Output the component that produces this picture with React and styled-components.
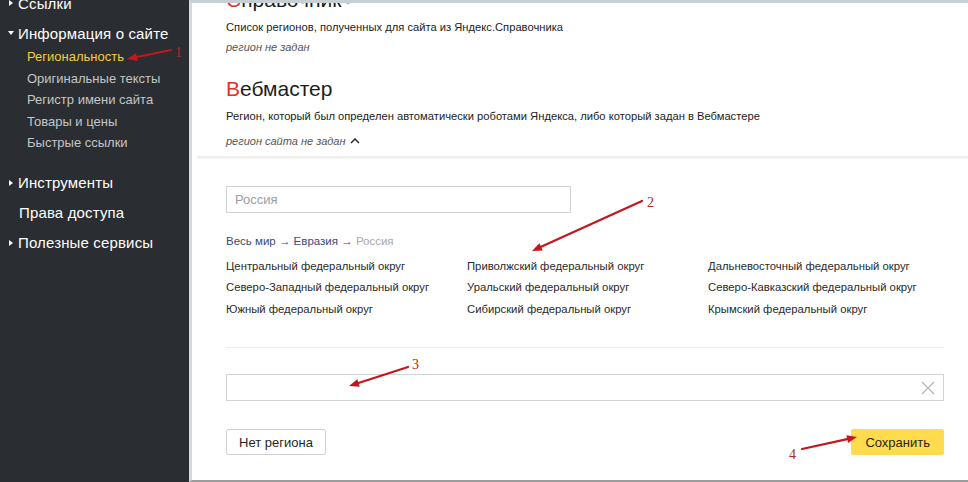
import React from "react";
import styled, { createGlobalStyle } from "styled-components";

const Global = createGlobalStyle`
  html, body {
    margin: 0;
    padding: 0;
    background: #ffffff;
  }
  body {
    font-family: "Liberation Sans", Arial, sans-serif;
  }
`;

const Page = styled.div`
  position: relative;
  display: flex;
  width: 968px;
  height: 482px;
  overflow: hidden;
`;

const Sidebar = styled.aside`
  width: 189px;
  flex-shrink: 0;
  background: #2a2d31;
  overflow: hidden;
`;

const NavItem = styled.div`
  display: flex;
  align-items: center;
  height: 30px;
  padding-left: ${(p) => (p.$arrow ? "8px" : "19px")};
  margin-top: ${(p) => p.$mt || 0};
  font-size: 15px;
  color: #ffffff;
  letter-spacing: 0.15px;
`;

const Tri = styled.span`
  display: inline-block;
  width: 0;
  height: 0;
  margin-right: ${(p) => (p.$open ? "4px" : "5px")};
  ${(p) =>
    p.$open
      ? `border-left: 3px solid transparent;
         border-right: 3px solid transparent;
         border-top: 4px solid #fff;`
      : `border-top: 3px solid transparent;
         border-bottom: 3px solid transparent;
         border-left: 4px solid #fff;
         margin-left: 1px;`}
`;

const SubList = styled.div`
  margin-top: -2px;
  margin-bottom: 14px;
`;

const SubItem = styled.div`
  height: 21.5px;
  line-height: 21.5px;
  padding-left: 27px;
  font-size: 13px;
  color: ${(p) => (p.$active ? "#f2cf3b" : "#c4c6c8")};
`;

const Main = styled.main`
  flex: 1;
  display: flex;
  flex-direction: column;
  border-left: 3px solid #d4d9dc;
  border-top: 3px solid #c6cfd4;
  border-bottom: 2px solid #9c9c9c;
  overflow: hidden;
`;

const Top = styled.section`
  padding: 0 24px 5px 34px;
  margin-top: -16px;
`;

const Title = styled.h2`
  margin: 0;
  font-size: 21px;
  font-weight: normal;
  line-height: 26px;
  color: #1d1d1d;
  display: flex;
  align-items: center;
  gap: 4px;
  margin-top: ${(p) => p.$mt || 0};
`;

const Red = styled.span`
  color: #e3312c;
`;

const Desc = styled.div`
  margin-top: 3.5px;
  font-size: 11.2px;
  line-height: 20px;
  color: #222;
`;

const Note = styled.div`
  font-size: 11px;
  line-height: 20px;
  font-style: italic;
  color: #555;
  display: flex;
  align-items: center;
  gap: 4px;
  margin-top: ${(p) => p.$mt || 0};
`;

const Divider = styled.div`
  height: 2px;
  margin-left: 5px;
  background: #eeeeee;
  box-shadow: 0 1px 1px rgba(0, 0, 0, 0.04);
`;

const Body = styled.section`
  padding: 28px 24px 0 34px;
`;

const Field = styled.div`
  display: flex;
  align-items: center;
  justify-content: space-between;
  box-sizing: border-box;
  width: ${(p) => p.$w || "100%"};
  height: 27px;
  border: 1px solid #d3d3d3;
  padding: 0 8px;
  font-size: 13px;
  color: #9d9d9d;
  background: #fff;
  margin-top: ${(p) => p.$mt || 0};
`;

const Crumbs = styled.div`
  margin-top: 18px;
  font-size: 11.5px;
  line-height: 20px;
  color: #3c4a7e;
`;

const Muted = styled.span`
  color: #a9a9a9;
`;

const Grid = styled.div`
  display: grid;
  grid-template-columns: 241px 241px 1fr;
  margin-top: 5px;
`;

const Cell = styled.div`
  font-size: 11.3px;
  line-height: 21.5px;
  color: #2a2a2a;
  white-space: nowrap;
`;

const Rule = styled.div`
  height: 1px;
  background: #efefef;
  margin-top: 27px;
`;

const Actions = styled.div`
  display: flex;
  justify-content: space-between;
  margin-top: 28px;
`;

const Button = styled.button`
  height: 26px;
  padding: 0 ${(p) => (p.$primary ? "13px" : "12px")};
  border: 1px solid ${(p) => (p.$primary ? "#ffdb4d" : "#d2d2d2")};
  background: ${(p) => (p.$primary ? "#ffdb4d" : "#fff")};
  border-radius: 2px;
  font-family: "Liberation Sans", Arial, sans-serif;
  font-size: 13px;
  color: #1f1f1f;
`;

const Overlay = styled.svg`
  position: absolute;
  left: 0;
  top: 0;
  pointer-events: none;
`;

const districts = [
  ["Центральный федеральный округ", "Приволжский федеральный округ", "Дальневосточный федеральный округ"],
  ["Северо-Западный федеральный округ", "Уральский федеральный округ", "Северо-Кавказский федеральный округ"],
  ["Южный федеральный округ", "Сибирский федеральный округ", "Крымский федеральный округ"],
];

const subItems = ["Оригинальные тексты", "Регистр имени сайта", "Товары и цены", "Быстрые ссылки"];

const arrows = [
  { x1: 171, y1: 50, x2: 127, y2: 59, n: "1", nx: 175, ny: 57 },
  { x1: 642, y1: 201, x2: 532, y2: 251, n: "2", nx: 647, ny: 207 },
  { x1: 408, y1: 367, x2: 349, y2: 386, n: "3", nx: 412, ny: 369 },
  { x1: 802, y1: 449, x2: 857, y2: 437, n: "4", nx: 789, ny: 459 },
];

function Arrow({ x1, y1, x2, y2, n, nx, ny }) {
  const dx = x2 - x1;
  const dy = y2 - y1;
  const len = Math.hypot(dx, dy);
  const ux = dx / len;
  const uy = dy / len;
  const bx = x2 - ux * 10;
  const by = y2 - uy * 10;
  const px = -uy * 4;
  const py = ux * 4;
  return (
    <g>
      <line x1={x1} y1={y1} x2={bx} y2={by} stroke="#c4161c" strokeWidth="2.2" strokeLinecap="round" />
      <polygon points={`${x2},${y2} ${bx + px},${by + py} ${bx - px},${by - py}`} fill="#c4161c" />
      <text x={nx} y={ny} fontFamily="'Liberation Serif', serif" fontSize="14" fill="#b3262a">
        {n}
      </text>
    </g>
  );
}

export default function App() {
  return (
    <Page>
      <Global />
      <Sidebar>
        <NavItem $arrow $mt="-12px">
          <Tri />
          Ссылки
        </NavItem>
        <NavItem $arrow>
          <Tri $open />
          Информация о сайте
        </NavItem>
        <SubList>
          <SubItem $active>Региональность</SubItem>
          {subItems.map((s) => (
            <SubItem key={s}>{s}</SubItem>
          ))}
        </SubList>
        <NavItem $arrow>
          <Tri />
          Инструменты
        </NavItem>
        <NavItem>Права доступа</NavItem>
        <NavItem $arrow>
          <Tri />
          Полезные сервисы
        </NavItem>
      </Sidebar>

      <Main>
        <Top>
          <Title>
            <span>
              <Red>С</Red>правочник
            </span>
            <svg width="9" height="9" viewBox="0 0 10 10">
              <path d="M1 9 L2 6 L7 1 L9 3 L4 8 Z" fill="none" stroke="#aaa" strokeWidth="1" />
            </svg>
          </Title>
          <Desc>Список регионов, полученных для сайта из Яндекс.Справочника</Desc>
          <Note>регион не задан</Note>
          <Title $mt="19.5px">
            <span>
              <Red>В</Red>ебмастер
            </span>
          </Title>
          <Desc>Регион, который был определен автоматически роботами Яндекса, либо который задан в Вебмастере</Desc>
          <Note $mt="5px">
            регион сайта не задан
            <svg width="10" height="7" viewBox="0 0 10 7">
              <path d="M1 6 L5 2 L9 6" fill="none" stroke="#222" strokeWidth="1.4" />
            </svg>
          </Note>
        </Top>
        <Divider />

        <Body>
          <Field $w="345px">Россия</Field>
          <Crumbs>
            Весь мир → Евразия → <Muted>Россия</Muted>
          </Crumbs>
          <Grid>
            {districts.flat().map((d) => (
              <Cell key={d}>{d}</Cell>
            ))}
          </Grid>
          <Rule />
          <Field $mt="26px">
            <span />
            <svg width="14" height="14" viewBox="0 0 14 14">
              <path d="M1 1 L13 13 M13 1 L1 13" stroke="#b5b5b5" strokeWidth="1.2" />
            </svg>
          </Field>
          <Actions>
            <Button>Нет региона</Button>
            <Button $primary>Сохранить</Button>
          </Actions>
        </Body>
      </Main>

      <Overlay width="968" height="482" viewBox="0 0 968 482">
        {arrows.map((a) => (
          <Arrow key={a.n} {...a} />
        ))}
      </Overlay>
    </Page>
  );
}
